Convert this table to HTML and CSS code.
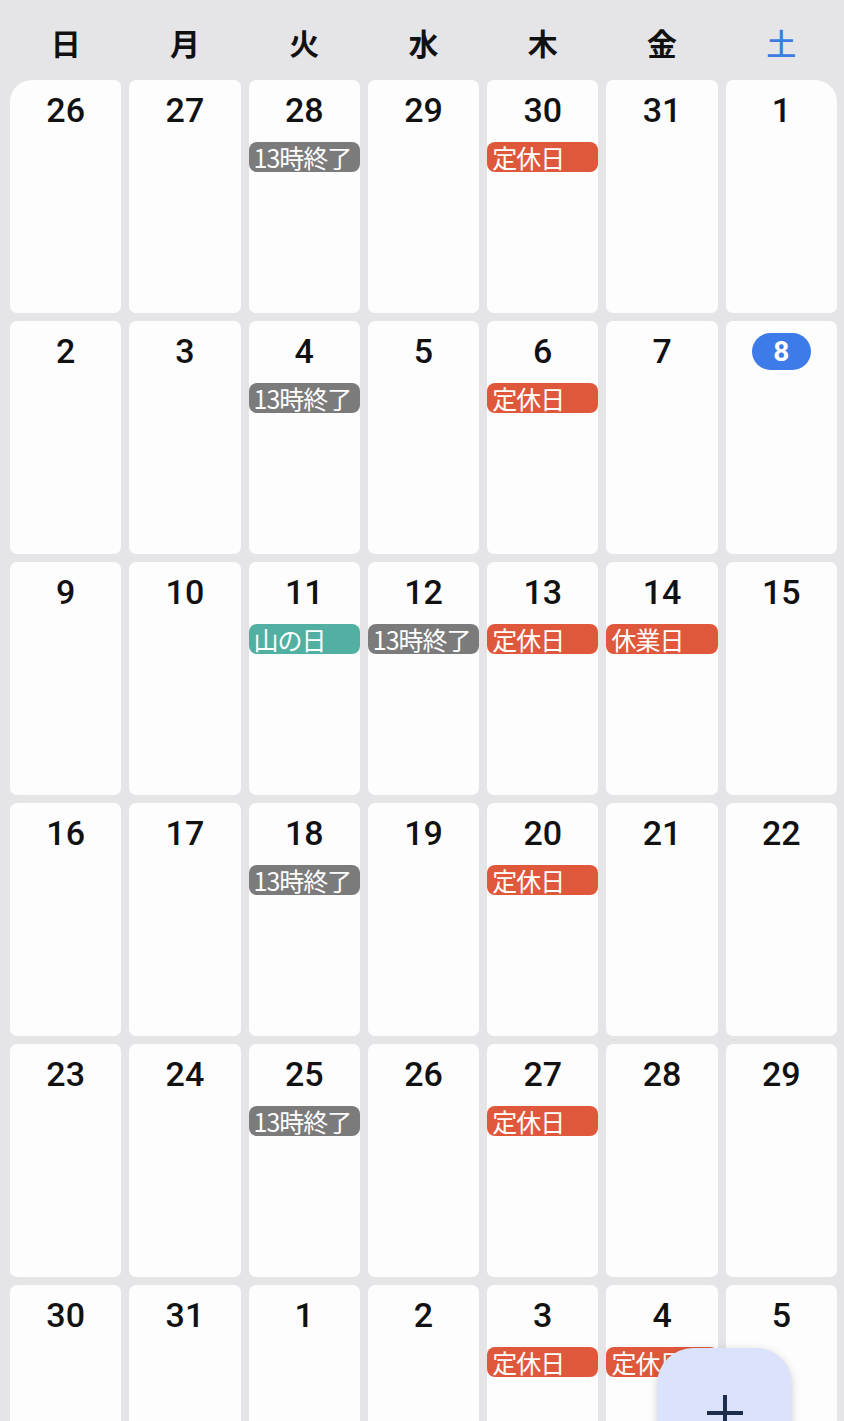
FILE: index.html
```html
<!DOCTYPE html>
<html lang="ja">
<head>
<meta charset="utf-8">
<link rel="stylesheet" href="styles.css">
</head>
<body>
<div class="cal">
  <div class="head">
    <div class="dow">日</div><div class="dow">月</div><div class="dow">火</div><div class="dow">水</div><div class="dow">木</div><div class="dow">金</div><div class="dow sat">土</div>
  </div>
  <div class="grid">
    <div class="cell tl"><span class="num">26</span></div>
    <div class="cell"><span class="num">27</span></div>
    <div class="cell"><span class="num">28</span><div class="badge gray">13時終了</div></div>
    <div class="cell"><span class="num">29</span></div>
    <div class="cell"><span class="num">30</span><div class="badge red">定休日</div></div>
    <div class="cell"><span class="num">31</span></div>
    <div class="cell tr"><span class="num">1</span></div>

    <div class="cell"><span class="num">2</span></div>
    <div class="cell"><span class="num">3</span></div>
    <div class="cell"><span class="num">4</span><div class="badge gray">13時終了</div></div>
    <div class="cell"><span class="num">5</span></div>
    <div class="cell"><span class="num">6</span><div class="badge red">定休日</div></div>
    <div class="cell"><span class="num">7</span></div>
    <div class="cell"><span class="num today">8</span></div>

    <div class="cell"><span class="num">9</span></div>
    <div class="cell"><span class="num">10</span></div>
    <div class="cell"><span class="num">11</span><div class="badge teal">山の日</div></div>
    <div class="cell"><span class="num">12</span><div class="badge gray">13時終了</div></div>
    <div class="cell"><span class="num">13</span><div class="badge red">定休日</div></div>
    <div class="cell"><span class="num">14</span><div class="badge red">休業日</div></div>
    <div class="cell"><span class="num">15</span></div>

    <div class="cell"><span class="num">16</span></div>
    <div class="cell"><span class="num">17</span></div>
    <div class="cell"><span class="num">18</span><div class="badge gray">13時終了</div></div>
    <div class="cell"><span class="num">19</span></div>
    <div class="cell"><span class="num">20</span><div class="badge red">定休日</div></div>
    <div class="cell"><span class="num">21</span></div>
    <div class="cell"><span class="num">22</span></div>

    <div class="cell"><span class="num">23</span></div>
    <div class="cell"><span class="num">24</span></div>
    <div class="cell"><span class="num">25</span><div class="badge gray">13時終了</div></div>
    <div class="cell"><span class="num">26</span></div>
    <div class="cell"><span class="num">27</span><div class="badge red">定休日</div></div>
    <div class="cell"><span class="num">28</span></div>
    <div class="cell"><span class="num">29</span></div>

    <div class="cell"><span class="num">30</span></div>
    <div class="cell"><span class="num">31</span></div>
    <div class="cell"><span class="num">1</span></div>
    <div class="cell"><span class="num">2</span></div>
    <div class="cell"><span class="num">3</span><div class="badge red">定休日</div></div>
    <div class="cell"><span class="num">4</span><div class="badge red">定休日</div></div>
    <div class="cell"><span class="num">5</span></div>
  </div>
</div>
<button class="fab" aria-label="追加">
  <svg width="38" height="38" viewBox="0 0 38 38"><path d="M19 1V37M1 19H37" stroke="#1f2d4d" stroke-width="4" fill="none"/></svg>
</button>
</body>
</html>
```
FILE: styles.css
```css
html, body {
  margin: 0;
  padding: 0;
}
body {
  width: 844px;
  height: 1421px;
  overflow: hidden;
  background: #e5e5e8;
  font-family: Roboto, "Noto Sans CJK JP", sans-serif;
  color: #111;
}
.cal {
  padding: 0 7px 0 10px;
}
.head {
  display: grid;
  grid-template-columns: repeat(7, 1fr);
  column-gap: 8px;
  height: 80px;
  align-items: center;
}
.dow {
  text-align: center;
  font-family: "Noto Sans CJK JP", sans-serif;
  font-weight: 700;
  font-size: 30px;
  line-height: 1;
  padding-top: 4px;
}
.dow.sat {
  color: #3f7ae0;
  font-weight: 500;
}
.grid {
  display: grid;
  grid-template-columns: repeat(7, 1fr);
  grid-auto-rows: 233px;
  gap: 8px;
}
.cell {
  background: #fdfdfe;
  border-radius: 7px;
  display: flex;
  flex-direction: column;
  align-items: center;
  padding-top: 11px;
  min-width: 0;
}
.cell.tl { border-top-left-radius: 22px; }
.cell.tr { border-top-right-radius: 22px; }
.num {
  height: 38px;
  line-height: 38px;
  font-size: 34px;
  font-weight: 500;
  min-width: 59px;
  text-align: center;
}
.num.today {
  background: #3d7be8;
  color: #fff;
  border-radius: 19px;
  height: 37px;
  line-height: 37px;
  font-size: 28px;
  font-weight: 700;
  margin-top: 1px;
}
.badge {
  align-self: stretch;
  margin-top: 13px;
  height: 30px;
  line-height: 30px;
  border-radius: 8px;
  color: #fff;
  font-family: "Noto Sans CJK JP", sans-serif;
  font-weight: 400;
  font-size: 25px;
  padding-left: 5px;
  white-space: nowrap;
  letter-spacing: -1px;
}
.badge.gray { background: #7b7b7b; }
.badge.red { background: #e0583c; }
.badge.teal { background: #52b0a2; }
.fab {
  position: fixed;
  left: 657px;
  top: 1348px;
  width: 135px;
  height: 130px;
  border: none;
  border-radius: 36px;
  background: #dbe2fb;
  box-shadow: 0 2px 8px rgba(0,0,0,0.18);
  display: flex;
  align-items: center;
  justify-content: center;
  padding: 0;
}
```
